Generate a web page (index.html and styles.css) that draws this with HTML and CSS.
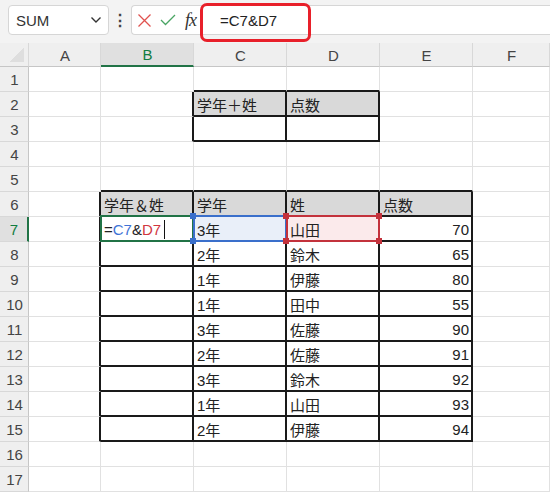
FILE: index.html
```html
<!DOCTYPE html>
<html lang="ja">
    <head>
        <meta charset="UTF-8">
        <meta name="viewport" content="width=device-width, initial-scale=1.0">
        <title>Excel</title>
        <link rel="stylesheet" href="styles.css">
    </head>
    <body>
        <!-- Formula bar -->
        <div class="topbar">
            <div class="namebox">
                <span>SUM</span>
                <svg class="chev" width="12" height="8" viewBox="0 0 12 8">
                    <path d="M1.5 1.5 L6 6 L10.5 1.5" fill="none" stroke="#333" stroke-width="1.4"/>
                </svg>
            </div>
            <div class="dots">⋮</div>
            <div class="formula">
                <svg class="icon" width="15" height="15" viewBox="0 0 15 15">
                    <path d="M1.5 1.5 L13.5 13.5 M13.5 1.5 L1.5 13.5" stroke="#e0524f" stroke-width="1.3"/>
                </svg>
                <svg class="icon" width="16" height="14" viewBox="0 0 16 14">
                    <path d="M1 7 L5.5 11.5 L15 2" fill="none" stroke="#4aa564" stroke-width="1.3"/>
                </svg>
                <span class="fx">fx</span>
                <div class="input">
                    <span class="input-text">=C7&amp;D7</span>
                </div>
            </div>
        </div>

        <!-- Sheet -->
        <div class="sheet">
            <div class="row head">
                <div class="cell corner"></div>
                <div class="cell">A</div>
                <div class="cell sel-col">B</div>
                <div class="cell">C</div>
                <div class="cell">D</div>
                <div class="cell">E</div>
                <div class="cell">F</div>
            </div>

            <div class="row">
                <div class="cell num">1</div>
                <div class="cell"></div>
                <div class="cell"></div>
                <div class="cell tt"></div>
                <div class="cell tt"></div>
                <div class="cell"></div>
                <div class="cell"></div>
            </div>

            <div class="row">
                <div class="cell num">2</div>
                <div class="cell"></div>
                <div class="cell tl"></div>
                <div class="cell t th">学年＋姓</div>
                <div class="cell t th">点数</div>
                <div class="cell"></div>
                <div class="cell"></div>
            </div>

            <div class="row">
                <div class="cell num">3</div>
                <div class="cell"></div>
                <div class="cell tl"></div>
                <div class="cell t"></div>
                <div class="cell t"></div>
                <div class="cell"></div>
                <div class="cell"></div>
            </div>

            <div class="row">
                <div class="cell num">4</div>
                <div class="cell"></div>
                <div class="cell"></div>
                <div class="cell"></div>
                <div class="cell"></div>
                <div class="cell"></div>
                <div class="cell"></div>
            </div>

            <div class="row">
                <div class="cell num">5</div>
                <div class="cell"></div>
                <div class="cell tt"></div>
                <div class="cell tt"></div>
                <div class="cell tt"></div>
                <div class="cell tt"></div>
                <div class="cell"></div>
            </div>

            <div class="row">
                <div class="cell num">6</div>
                <div class="cell tl"></div>
                <div class="cell t th">学年＆姓</div>
                <div class="cell t th">学年</div>
                <div class="cell t th">姓</div>
                <div class="cell t th">点数</div>
                <div class="cell"></div>
            </div>

            <div class="row">
                <div class="cell num sel-row">7</div>
                <div class="cell tl"></div>
                <div class="cell t editing">
                    <span>=</span><span class="ref-blue">C7</span><span>&amp;</span><span class="ref-red">D7</span>
                    <span class="caret"></span>
                </div>
                <div class="cell t range-blue">3年
                    <span class="knob k-tl"></span><span class="knob k-tr"></span>
                    <span class="knob k-bl"></span><span class="knob k-br"></span>
                </div>
                <div class="cell t range-red">山田
                    <span class="knob k-tl"></span><span class="knob k-tr"></span>
                    <span class="knob k-bl"></span><span class="knob k-br"></span>
                </div>
                <div class="cell t right">70</div>
                <div class="cell"></div>
            </div>

            <div class="row">
                <div class="cell num">8</div>
                <div class="cell tl"></div>
                <div class="cell t"></div>
                <div class="cell t">2年</div>
                <div class="cell t">鈴木</div>
                <div class="cell t right">65</div>
                <div class="cell"></div>
            </div>

            <div class="row">
                <div class="cell num">9</div>
                <div class="cell tl"></div>
                <div class="cell t"></div>
                <div class="cell t">1年</div>
                <div class="cell t">伊藤</div>
                <div class="cell t right">80</div>
                <div class="cell"></div>
            </div>

            <div class="row">
                <div class="cell num">10</div>
                <div class="cell tl"></div>
                <div class="cell t"></div>
                <div class="cell t">1年</div>
                <div class="cell t">田中</div>
                <div class="cell t right">55</div>
                <div class="cell"></div>
            </div>

            <div class="row">
                <div class="cell num">11</div>
                <div class="cell tl"></div>
                <div class="cell t"></div>
                <div class="cell t">3年</div>
                <div class="cell t">佐藤</div>
                <div class="cell t right">90</div>
                <div class="cell"></div>
            </div>

            <div class="row">
                <div class="cell num">12</div>
                <div class="cell tl"></div>
                <div class="cell t"></div>
                <div class="cell t">2年</div>
                <div class="cell t">佐藤</div>
                <div class="cell t right">91</div>
                <div class="cell"></div>
            </div>

            <div class="row">
                <div class="cell num">13</div>
                <div class="cell tl"></div>
                <div class="cell t"></div>
                <div class="cell t">3年</div>
                <div class="cell t">鈴木</div>
                <div class="cell t right">92</div>
                <div class="cell"></div>
            </div>

            <div class="row">
                <div class="cell num">14</div>
                <div class="cell tl"></div>
                <div class="cell t"></div>
                <div class="cell t">1年</div>
                <div class="cell t">山田</div>
                <div class="cell t right">93</div>
                <div class="cell"></div>
            </div>

            <div class="row">
                <div class="cell num">15</div>
                <div class="cell tl"></div>
                <div class="cell t"></div>
                <div class="cell t">2年</div>
                <div class="cell t">伊藤</div>
                <div class="cell t right">94</div>
                <div class="cell"></div>
            </div>

            <div class="row">
                <div class="cell num">16</div>
                <div class="cell"></div>
                <div class="cell"></div>
                <div class="cell"></div>
                <div class="cell"></div>
                <div class="cell"></div>
                <div class="cell"></div>
            </div>

            <div class="row">
                <div class="cell num">17</div>
                <div class="cell"></div>
                <div class="cell"></div>
                <div class="cell"></div>
                <div class="cell"></div>
                <div class="cell"></div>
                <div class="cell"></div>
            </div>
        </div>
    </body>
</html>
```

FILE: styles.css
```css
* {
    box-sizing: border-box;
}

body {
    margin: 0;
    width: 550px;
    height: 493px;
    overflow: hidden;
    background-color: #ffffff;
    font-family: "Liberation Sans", "Noto Sans CJK JP", sans-serif;
    color: #222;
}

/* Formula bar */
.topbar {
    height: 43px;
    background-color: #f3f3f3;
    display: flex;
    align-items: flex-start;
    padding: 5px 0 0 8px;
}

.namebox {
    width: 101px;
    height: 30px;
    background-color: #fff;
    border: 1px solid #d6d6d6;
    border-radius: 4px;
    display: flex;
    align-items: center;
    justify-content: space-between;
    padding: 0 6px 0 7px;
    font-size: 15px;
    color: #333;
}

.dots {
    width: 22px;
    height: 30px;
    display: flex;
    align-items: center;
    justify-content: center;
    font-size: 16px;
    font-weight: bold;
    color: #444;
}

.formula {
    flex: 1;
    height: 30px;
    background-color: #fff;
    border: 1px solid #d6d6d6;
    border-right: none;
    border-radius: 4px 0 0 4px;
    display: flex;
    align-items: center;
    padding-left: 5px;
}

.icon {
    margin-right: 8px;
}

.fx {
    font-family: "Liberation Serif", "DejaVu Serif", serif;
    font-style: italic;
    font-size: 18px;
    color: #333;
    margin: 0 5px 0 1px;
    letter-spacing: -1px;
}

.input {
    position: relative;
    height: 30px;
    flex: 1;
    display: flex;
    align-items: center;
    padding-left: 19px;
    font-size: 15px;
    color: #222;
}

.input::before {
    content: "";
    position: absolute;
    left: -1px;
    top: -2px;
    width: 105px;
    height: 33px;
    border: 3px solid #e8202a;
    border-radius: 7px;
}

/* Sheet */
.row {
    display: grid;
    grid-template-columns: 29px 72px 93px 93px 93px 93px 1fr;
    height: 25px;
}

.cell {
    position: relative;
    border-right: 1px solid #e1e1e1;
    border-bottom: 1px solid #e1e1e1;
    font-size: 15px;
    padding: 1px 2px 0 3px;
    display: flex;
    align-items: center;
    white-space: nowrap;
}

.head {
    height: 24px;
    background-color: #efefef;
}

.head .cell {
    justify-content: center;
    color: #444;
    border-right-color: #d8d8d8;
    border-bottom-color: #c6c6c6;
}

.corner {
    background: linear-gradient(135deg, transparent 58%, #dedede 58%) no-repeat;
    background-size: 17px 17px;
    background-position: right 4px bottom 4px;
}

.sel-col {
    background-color: #e0e0e0;
    color: #107c41 !important;
    border-bottom: 2px solid #217346 !important;
}

.num {
    background-color: #efefef;
    color: #444;
    justify-content: center;
    border-right-color: #c6c6c6;
    border-bottom-color: #d8d8d8;
}

.sel-row {
    background-color: #e0e0e0;
    color: #107c41;
    border-right: 2px solid #217346;
}

/* Bordered tables */
.t {
    border-right: 2px solid #1a1a1a;
    border-bottom: 2px solid #1a1a1a;
}

.tl {
    border-right: 2px solid #1a1a1a;
}

.tt {
    border-bottom: 2px solid #1a1a1a;
}

.th {
    background-color: #d9d9d9;
}

.right {
    justify-content: flex-end;
}

/* Editing cell and reference ranges */
.editing::after {
    content: "";
    position: absolute;
    left: -1px;
    top: -2px;
    right: -2px;
    bottom: -2px;
    border: 2px solid #217346;
}

.ref-blue {
    color: #3f73d6;
}

.ref-red {
    color: #d1363f;
}

.caret {
    width: 1px;
    height: 19px;
    background-color: #111;
    margin-left: 3px;
}

.range-blue {
    background-color: #e9eff9;
}

.range-blue::after,
.range-red::after {
    content: "";
    position: absolute;
    left: -1px;
    top: -2px;
    right: -2px;
    bottom: -2px;
    border: 2px solid #3a6fcb;
}

.range-red {
    background-color: #fbeaeb;
}

.range-red::after {
    border-color: #c3323c;
}

.knob {
    position: absolute;
    width: 6px;
    height: 6px;
    background-color: #3a6fcb;
    z-index: 2;
}

.range-red .knob {
    background-color: #c3323c;
}

.k-tl {
    left: -4px;
    top: -4px;
}

.k-tr {
    right: -4px;
    top: -4px;
}

.k-bl {
    left: -4px;
    bottom: -4px;
}

.k-br {
    right: -4px;
    bottom: -4px;
}
```
